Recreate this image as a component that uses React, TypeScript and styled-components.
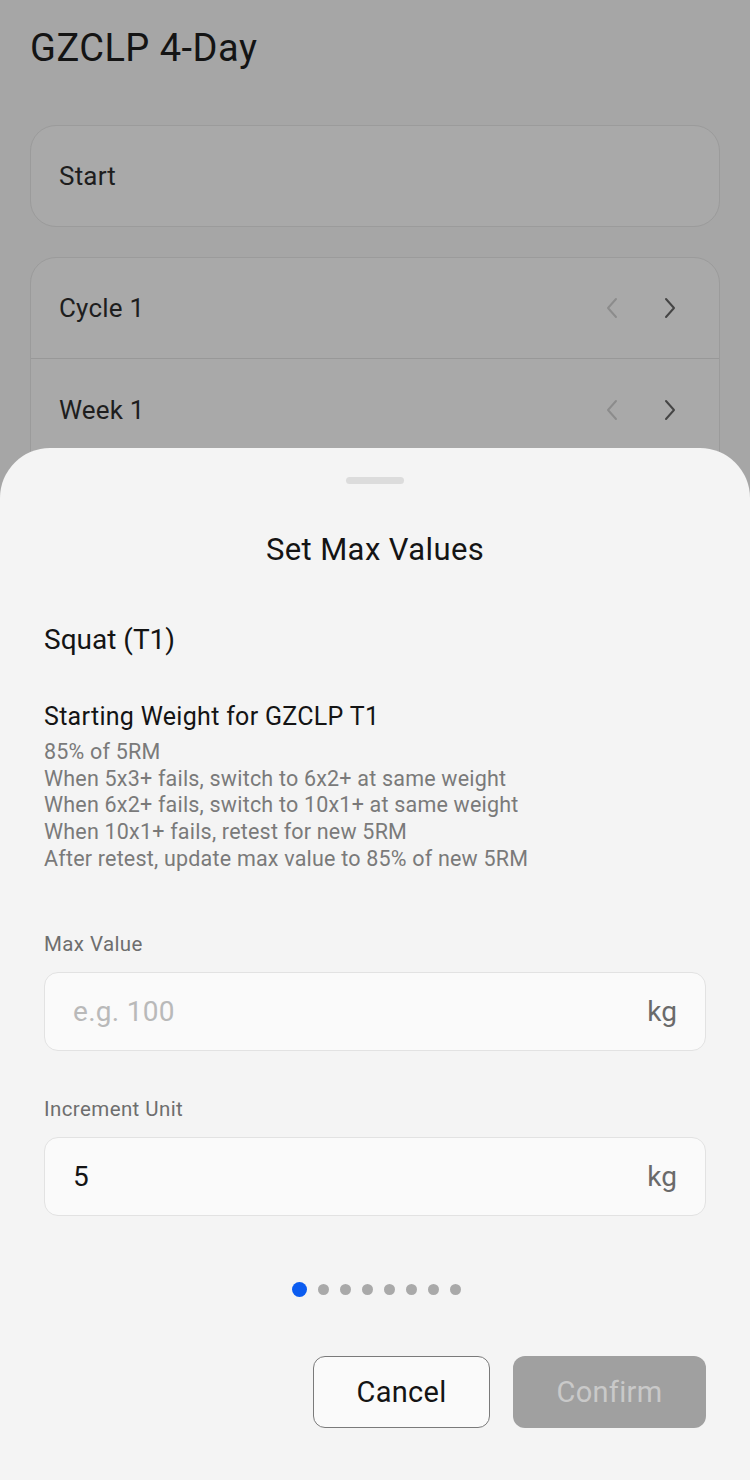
import styled, { createGlobalStyle } from "styled-components";

const GlobalStyle = createGlobalStyle`
  * { box-sizing: border-box; }
  html, body { margin: 0; padding: 0; }
  body {
    font-family: Roboto, "Noto Sans", "Liberation Sans", sans-serif;
    background: #a6a6a6;
  }
`;

const Screen = styled.div`
  position: relative;
  width: 750px;
  height: 1480px;
  overflow: hidden;
  background: #a6a6a6;
`;

const Page = styled.div`
  padding: 28px 30px 0;
  display: flex;
  flex-direction: column;
`;

const PageTitle = styled.h1`
  margin: 0;
  font-size: 38px;
  line-height: 40px;
  font-weight: 400;
  letter-spacing: 0.5px;
  color: #141414;
`;

const Card = styled.div<{ $top: number }>`
  margin-top: ${(p) => p.$top}px;
  border: 1.5px solid #9b9b9b;
  border-radius: 26px;
  background: #a9a9a9;
  overflow: hidden;
`;

const Row = styled.div<{ $divider?: boolean }>`
  height: ${(p) => (p.$divider ? 103 : 100)}px;
  display: flex;
  align-items: center;
  justify-content: space-between;
  padding: 0 28px 0 28px;
  font-size: 26px;
  letter-spacing: 0.2px;
  color: #1e1e1e;
  border-top: ${(p) => (p.$divider ? "1.5px solid #989898" : "none")};
`;

const Arrows = styled.div`
  display: flex;
  gap: 44px;
  align-items: center;
  padding-right: 14px;
`;

const Chevron = ({ dir, color }: { dir: "left" | "right"; color: string }) => (
  <svg width="14" height="24" viewBox="0 0 14 24">
    <path
      d={dir === "left" ? "M11 3 L3 12 L11 21" : "M3 3 L11 12 L3 21"}
      fill="none"
      stroke={color}
      strokeWidth="2"
      strokeLinecap="round"
      strokeLinejoin="round"
    />
  </svg>
);

const Sheet = styled.div`
  position: absolute;
  left: 0;
  right: 0;
  top: 448px;
  bottom: 0;
  background: #f4f4f4;
  border-radius: 50px 50px 0 0;
  padding: 0 44px;
  display: flex;
  flex-direction: column;
`;

const Handle = styled.div`
  align-self: center;
  width: 58px;
  height: 7px;
  margin-top: 29px;
  border-radius: 4px;
  background: #dcdcdc;
`;

const SheetTitle = styled.h2`
  margin: 48px 0 0;
  text-align: center;
  font-size: 31px;
  line-height: 36px;
  font-weight: 400;
  letter-spacing: 0.4px;
  color: #141414;
`;

const Exercise = styled.div`
  margin-top: 55px;
  font-size: 28px;
  line-height: 34px;
  color: #141414;
`;

const SubHeading = styled.div`
  margin-top: 45px;
  font-size: 25px;
  line-height: 30px;
  letter-spacing: 0.3px;
  color: #141414;
`;

const Notes = styled.div`
  margin-top: 7px;
  font-size: 21.5px;
  line-height: 26.7px;
  letter-spacing: 0.2px;
  color: #7a7a7a;
`;

const Label = styled.div<{ $top: number }>`
  margin-top: ${(p) => p.$top}px;
  font-size: 20.5px;
  line-height: 26px;
  letter-spacing: 0.4px;
  color: #6e6e6e;
`;

const InputBox = styled.div`
  margin-top: 15px;
  height: 79px;
  border: 1.5px solid #e2e2e2;
  border-radius: 14px;
  background: #fafafa;
  display: flex;
  align-items: center;
  justify-content: space-between;
  padding: 0 28px 0 28px;
`;

const Value = styled.span<{ $placeholder?: boolean }>`
  font-size: 28px;
  letter-spacing: 0.3px;
  color: ${(p) => (p.$placeholder ? "#b9b9b9" : "#141414")};
`;

const Unit = styled.span`
  font-size: 28px;
  color: #6a6a6a;
`;

const Dots = styled.div`
  margin-top: 66px;
  height: 16px;
  display: flex;
  align-items: center;
  justify-content: center;
  gap: 11px;
  padding-left: 2px;
`;

const Dot = styled.span<{ $active?: boolean }>`
  width: ${(p) => (p.$active ? 15 : 11)}px;
  height: ${(p) => (p.$active ? 15 : 11)}px;
  border-radius: 50%;
  background: ${(p) => (p.$active ? "#0b5cf0" : "#a9a9a9")};
`;

const Buttons = styled.div`
  margin-top: 58px;
  display: flex;
  justify-content: flex-end;
  gap: 23px;
`;

const Button = styled.button<{ $primary?: boolean; $width: number }>`
  width: ${(p) => p.$width}px;
  height: 72px;
  border-radius: 12px;
  font-family: inherit;
  font-size: 29px;
  letter-spacing: 0.3px;
  border: ${(p) => (p.$primary ? "none" : "1.5px solid #7a7a7a")};
  background: ${(p) => (p.$primary ? "#a0a0a0" : "#fafafa")};
  color: ${(p) => (p.$primary ? "#c9c9c9" : "#141414")};
  padding: 0;
`;

export default function App() {
  const dots = [0, 1, 2, 3, 4, 5, 6, 7];
  return (
    <>
      <GlobalStyle />
      <Screen>
        <Page>
          <PageTitle>GZCLP 4-Day</PageTitle>
          <Card $top={57}>
            <Row>Start</Row>
          </Card>
          <Card $top={30}>
            <Row>
              Cycle 1
              <Arrows>
                <Chevron dir="left" color="#8c8c8c" />
                <Chevron dir="right" color="#454545" />
              </Arrows>
            </Row>
            <Row $divider>
              Week 1
              <Arrows>
                <Chevron dir="left" color="#8c8c8c" />
                <Chevron dir="right" color="#454545" />
              </Arrows>
            </Row>
            <Row $divider />
          </Card>
        </Page>
        <Sheet>
          <Handle />
          <SheetTitle>Set Max Values</SheetTitle>
          <Exercise>Squat (T1)</Exercise>
          <SubHeading>Starting Weight for GZCLP T1</SubHeading>
          <Notes>
            85% of 5RM
            <br />
            When 5x3+ fails, switch to 6x2+ at same weight
            <br />
            When 6x2+ fails, switch to 10x1+ at same weight
            <br />
            When 10x1+ fails, retest for new 5RM
            <br />
            After retest, update max value to 85% of new 5RM
          </Notes>
          <Label $top={58}>Max Value</Label>
          <InputBox>
            <Value $placeholder>e.g. 100</Value>
            <Unit>kg</Unit>
          </InputBox>
          <Label $top={45}>Increment Unit</Label>
          <InputBox>
            <Value>5</Value>
            <Unit>kg</Unit>
          </InputBox>
          <Dots>
            {dots.map((d) => (
              <Dot key={d} $active={d === 0} />
            ))}
          </Dots>
          <Buttons>
            <Button $width={177}>Cancel</Button>
            <Button $primary $width={193}>
              Confirm
            </Button>
          </Buttons>
        </Sheet>
      </Screen>
    </>
  );
}
